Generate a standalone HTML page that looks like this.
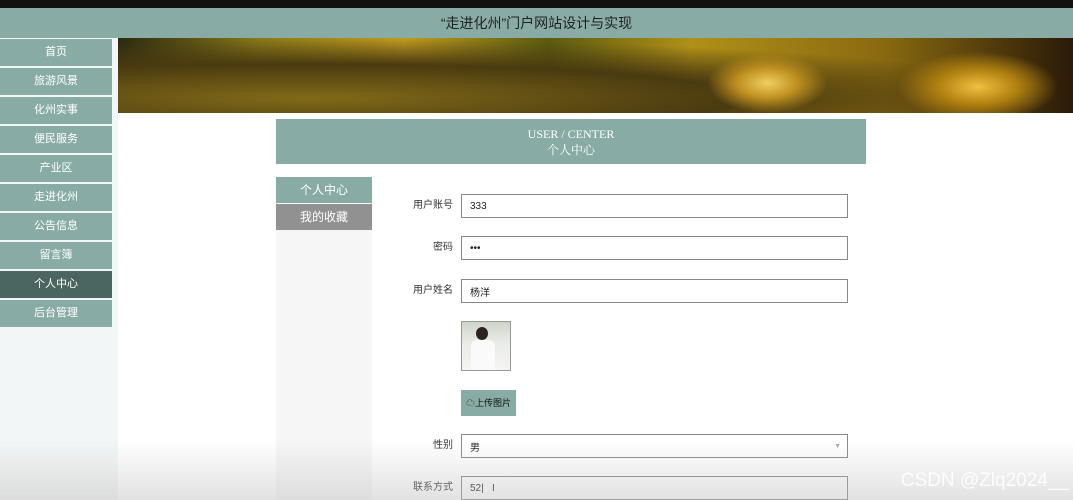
<!DOCTYPE html><html><head><meta charset="utf-8"><style>
*{margin:0;padding:0;box-sizing:border-box}
body{width:1073px;height:500px;overflow:hidden;background:#fff;font-family:"Liberation Sans","Noto Sans CJK SC",sans-serif;position:relative}
.top{position:absolute;left:0;top:0;width:1073px;height:8px;background:#111}
.hdr{position:absolute;left:0;top:8px;width:1073px;height:30px;background:#88aca5;color:#222;font-size:14px;text-align:center;line-height:30px}
.side{position:absolute;left:0;top:38px;width:118px;height:462px;background:#f3f6f6}
.nav{position:absolute;left:0;width:112px;height:27px;background:#88aca5;color:#fff;font-size:11px;text-align:center;line-height:27px}
.nav.act{background:#4b6560}
.ban{position:absolute;left:118px;top:38px;width:955px;height:75px;background:radial-gradient(ellipse 60px 30px at 68% 60%,#f0d060 0,#c09020 50%,transparent 100%),radial-gradient(ellipse 80px 35px at 90% 65%,#f0c040 0,#b08010 50%,transparent 100%),radial-gradient(ellipse at 20% 80%,#806a18 0,#4a3a10 40%,transparent 70%),linear-gradient(90deg,#2a2a10,#8a7a18 15%,#c09a20 30%,#5a5a10 45%,#b09018 60%,#8a6a10 80%,#2a1a08)}
.box{position:absolute;left:276px;top:119px;width:590px;height:45px;background:#88aca5;color:#fff;text-align:center;font-family:"Liberation Serif","Noto Serif CJK SC",serif;font-size:12px;line-height:16px;padding-top:7px}
.col{position:absolute;left:276px;top:177px;width:96px;height:323px;background:#f6f6f6}
.tab{position:absolute;left:276px;width:96px;height:26px;color:#fff;font-size:12px;text-align:center;line-height:26px}
.lbl{position:absolute;right:620px;font-size:10px;color:#333;height:24px;line-height:24px}
.in{position:absolute;left:461px;width:387px;height:24px;border:1px solid #888;background:#fff;font-size:10px;display:flex;align-items:center;padding-left:8px;color:#222}
.shade{position:absolute;left:0;top:440px;width:1073px;height:60px;background:linear-gradient(rgba(210,210,210,0),rgba(190,190,190,.45))}
.wm{position:absolute;right:4px;top:470px;font-size:19px;color:rgba(255,255,255,.85)}
</style></head><body>
<div class="top"></div>
<div class="hdr">“走进化州”门户网站设计与实现</div>
<div class="side"></div>
<div class="nav" style="top:39px">首页</div>
<div class="nav" style="top:68px">旅游风景</div>
<div class="nav" style="top:97px">化州实事</div>
<div class="nav" style="top:126px">便民服务</div>
<div class="nav" style="top:155px">产业区</div>
<div class="nav" style="top:184px">走进化州</div>
<div class="nav" style="top:213px">公告信息</div>
<div class="nav" style="top:242px">留言簿</div>
<div class="nav act" style="top:271px">个人中心</div>
<div class="nav" style="top:300px">后台管理</div>
<div class="ban"></div>
<div class="box">USER / CENTER<br>个人中心</div>
<div class="col"></div>
<div class="tab" style="top:177px;background:#88aca5">个人中心</div>
<div class="tab" style="top:204px;background:#919191">我的收藏</div>
<div class="lbl" style="top:194px">用户账号</div><div class="in" style="top:194px">333</div>
<div class="lbl" style="top:236px">密码</div><div class="in" style="top:236px">•••</div>
<div class="lbl" style="top:279px">用户姓名</div><div class="in" style="top:279px">杨洋</div>
<div style="position:absolute;left:461px;top:321px;width:50px;height:50px;border:1px solid #999;background:linear-gradient(#cfd3c8,#e8ebe4 40%,#f4f4f2);overflow:hidden"><div style="position:absolute;left:14px;top:5px;width:12px;height:13px;border-radius:50%;background:#2a2420"></div><div style="position:absolute;left:9px;top:18px;width:24px;height:31px;background:#fafafa;border-radius:6px 6px 0 0"></div></div>
<div style="position:absolute;left:461px;top:390px;width:55px;height:26px;background:#88aca5;font-size:9px;line-height:26px;text-align:center;color:#111">☁上传图片</div>
<div class="lbl" style="top:434px">性别</div><div class="in" style="top:434px">男<span style="position:absolute;right:6px;color:#aaa;font-size:7px">▼</span></div>
<div class="lbl" style="top:476px">联系方式</div><div class="in" style="top:476px">52| &nbsp;&nbsp;I</div>
<div class="shade"></div>
<div class="wm">CSDN @Zlq2024__</div>
</body></html>
